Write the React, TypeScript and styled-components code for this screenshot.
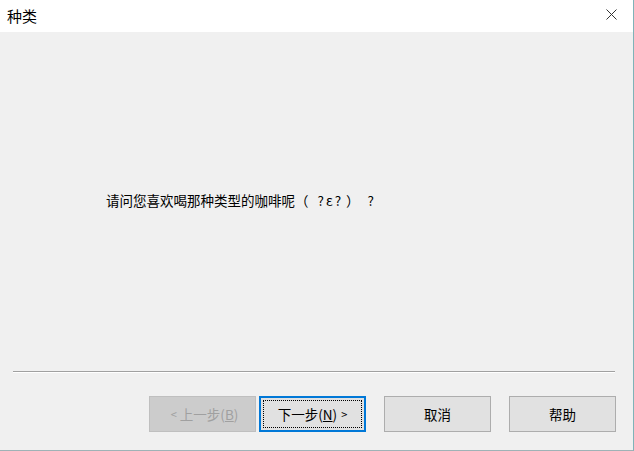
import React from "react";
import styled, { createGlobalStyle } from "styled-components";

const Global = createGlobalStyle`
  html, body { margin: 0; padding: 0; background: #f0f0f0; }
  body { font-family: "Noto Sans CJK SC", "Microsoft YaHei", sans-serif; }
`;

const Window = styled.div`
  width: 634px;
  height: 451px;
  box-sizing: border-box;
  background: #f0f0f0;
  border-right: 1px solid #7fb3b8;
  border-bottom: 1px solid #9fb2b6;
  display: flex;
  flex-direction: column;
  overflow: hidden;
`;

const TitleBar = styled.div`
  height: 32px;
  flex: none;
  background: #ffffff;
  display: flex;
  align-items: center;
  justify-content: space-between;
  padding: 0 0 0 7px;
`;

const Title = styled.span`
  font-size: 15px;
  color: #000;
  line-height: 1;
  margin-top: -2px;
`;

const CloseButton = styled.div`
  width: 44px;
  height: 32px;
  display: flex;
  align-items: center;
  justify-content: center;
  margin-top: -3px;
`;

const Content = styled.div`
  height: 339px;
  flex: none;
  box-sizing: border-box;
  padding: 158px 0 0 106px;
`;

const Question = styled.p`
  margin: 0;
  font-size: 13.5px;
  line-height: 20px;
  color: #000;
  white-space: pre;
`;

const Emote = styled.span`
  margin: 0 3px 0 9px;
  letter-spacing: 2px;
`;

const Tail = styled.span`
  margin-left: 8px;
`;

const Separator = styled.div`
  margin: 0 18px 0 13px;
  height: 1px;
  border-top: 1px solid #a0a0a0;
  background: #ffffff;
  flex: none;
`;

const ButtonRow = styled.div`
  display: flex;
  justify-content: flex-end;
  padding: 23px 17px 0 0;
`;

const Button = styled.button<{ $variant?: "disabled" | "focused" | "normal"; $gap?: number }>`
  width: 107px;
  height: 36px;
  box-sizing: border-box;
  margin-left: ${(p) => p.$gap ?? 18}px;
  font-family: "Noto Sans CJK SC", "Microsoft YaHei", sans-serif;
  font-size: 13.5px;
  padding: 0;
  display: flex;
  align-items: center;
  justify-content: center;
  position: relative;
  background: ${(p) => (p.$variant === "disabled" ? "#cccccc" : "#e1e1e1")};
  border: 1px solid
    ${(p) =>
      p.$variant === "disabled" ? "#bfbfbf" : p.$variant === "focused" ? "#0078d7" : "#adadad"};
  color: ${(p) => (p.$variant === "disabled" ? "#a0a0a0" : "#000")};
  ${(p) => (p.$variant === "focused" ? "box-shadow: inset 0 0 0 1px #0078d7;" : "")}
`;

const FocusRing = styled.span`
  position: absolute;
  inset: 3px;
  border: 1px dotted #000;
  pointer-events: none;
`;

const Mnemonic = styled.span`
  text-decoration: underline;
`;

const Arrow = styled.span`
  font-size: 11px;
  margin-left: 4px;
`;

export default function App() {
  return (
    <>
      <Global />
      <Window>
        <TitleBar>
          <Title>种类</Title>
          <CloseButton>
            <svg width="11" height="11" viewBox="0 0 11 11">
              <path d="M0.5 0.5 L10.5 10.5 M10.5 0.5 L0.5 10.5" stroke="#333" strokeWidth="1" fill="none" />
            </svg>
          </CloseButton>
        </TitleBar>
        <Content>
          <Question>
            请问您喜欢喝那种类型的咖啡呢（<Emote>?ε?</Emote>）<Tail>?</Tail>
          </Question>
        </Content>
        <Separator />
        <ButtonRow>
          <Button $variant="disabled" $gap={0}>
            <Arrow>&lt;</Arrow>&nbsp;上一步(<Mnemonic>B</Mnemonic>)
          </Button>
          <Button $variant="focused" $gap={3}>
            <FocusRing />
            下一步(<Mnemonic>N</Mnemonic>)<Arrow>&gt;</Arrow>
          </Button>
          <Button $variant="normal">取消</Button>
          <Button $variant="normal">帮助</Button>
        </ButtonRow>
      </Window>
    </>
  );
}
